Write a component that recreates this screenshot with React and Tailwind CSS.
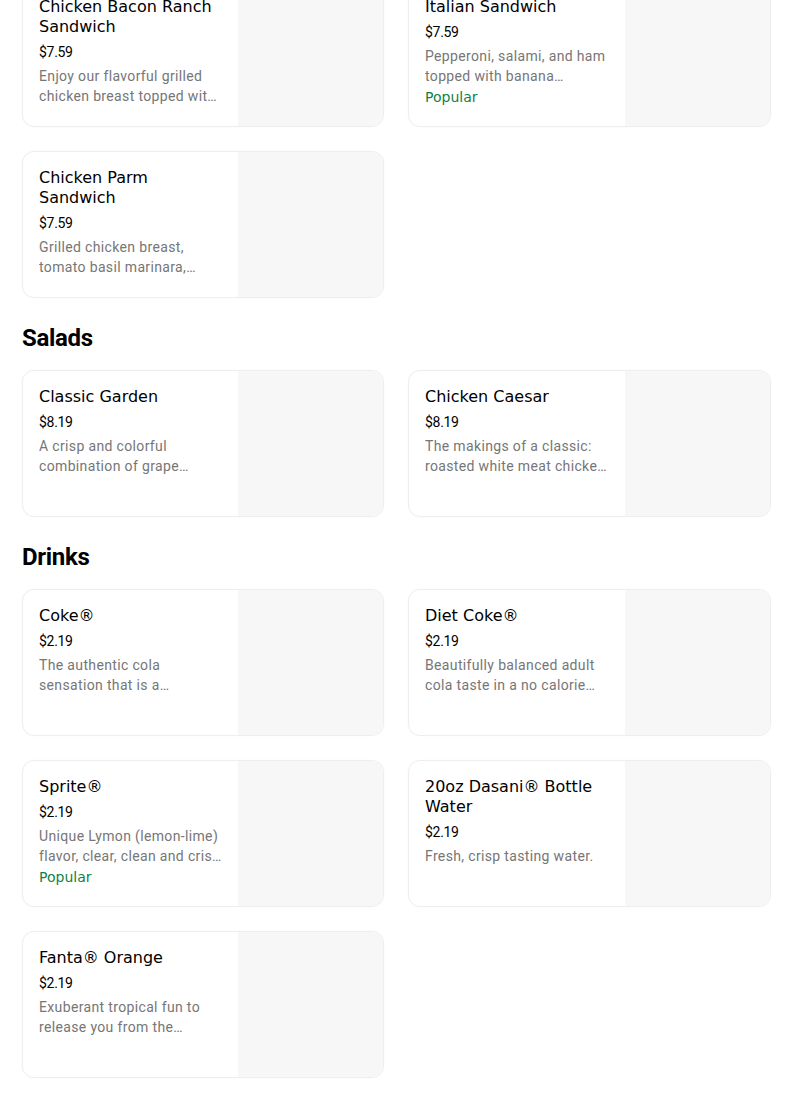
import React from "react";

const sections = [
  {
    title: null,
    items: [
      {
        name: "Chicken Bacon Ranch Sandwich",
        price: "$7.59",
        desc: "Enjoy our flavorful grilled chicken breast topped with smoky bacon, ranch and melted cheese.",
      },
      {
        name: "Italian Sandwich",
        price: "$7.59",
        desc: "Pepperoni, salami, and ham topped with banana peppers, lettuce and tomatoes.",
        popular: true,
      },
      {
        name: "Chicken Parm Sandwich",
        price: "$7.59",
        desc: "Grilled chicken breast, tomato basil marinara, mozzarella and parmesan.",
      },
    ],
  },
  {
    title: "Salads",
    items: [
      {
        name: "Classic Garden",
        price: "$8.19",
        desc: "A crisp and colorful combination of grape tomatoes, cucumbers and cheese.",
      },
      {
        name: "Chicken Caesar",
        price: "$8.19",
        desc: "The makings of a classic: roasted white meat chicken, romaine and parmesan.",
      },
    ],
  },
  {
    title: "Drinks",
    items: [
      {
        name: "Coke®",
        price: "$2.19",
        desc: "The authentic cola sensation that is a refreshing part of sharing life's moments.",
      },
      {
        name: "Diet Coke®",
        price: "$2.19",
        desc: "Beautifully balanced adult cola taste in a no calorie beverage.",
      },
      {
        name: "Sprite®",
        price: "$2.19",
        desc: "Unique Lymon (lemon-lime) flavor, clear, clean and crisp with no caffeine.",
        popular: true,
      },
      {
        name: "20oz Dasani® Bottle Water",
        price: "$2.19",
        desc: "Fresh, crisp tasting water.",
      },
      {
        name: "Fanta® Orange",
        price: "$2.19",
        desc: "Exuberant tropical fun to release you from the everyday.",
      },
    ],
  },
];

function ItemCard({ item }) {
  return (
    <div className="flex h-[147px] overflow-hidden rounded-xl border border-[#eeeeee] bg-white shadow-[0_0_2px_rgba(0,0,0,0.03)]">
      <div className="flex min-w-0 flex-1 flex-col px-4 pt-4">
        <p className="font-['DejaVu_Sans',sans-serif] text-base leading-5 text-black">
          {item.name}
        </p>
        <p className="mt-[5px] font-['Roboto',sans-serif] text-sm leading-5 tracking-[-0.3px] text-black">
          {item.price}
        </p>
        <p className="mt-1 line-clamp-2 font-['Roboto',sans-serif] text-sm leading-5 tracking-[0.35px] text-[#767676]">
          {item.desc}
        </p>
        {item.popular && (
          <p className="mt-px font-['DejaVu_Sans',sans-serif] text-sm leading-5 text-[#0e8345]">
            Popular
          </p>
        )}
      </div>
      <div className="w-[145px] shrink-0 bg-[#f7f7f7]" />
    </div>
  );
}

export default function App() {
  return (
    <div className="min-h-[1103px] bg-white px-[22px] pb-6">
      <div className="-mt-[20px]">
        {sections.map((section, i) => (
          <section key={i} className={i > 0 ? "mt-6" : ""}>
            {section.title && (
              <h2 className="mb-4 font-['Roboto',sans-serif] text-2xl font-bold leading-8 tracking-[-0.3px] text-black">
                {section.title}
              </h2>
            )}
            <div className="grid grid-cols-[362px_363px] gap-6">
              {section.items.map((item) => (
                <ItemCard key={item.name} item={item} />
              ))}
            </div>
          </section>
        ))}
      </div>
    </div>
  );
}
